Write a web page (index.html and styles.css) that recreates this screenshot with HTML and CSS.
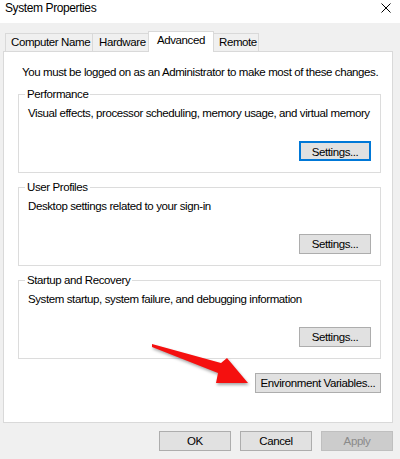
FILE: index.html
```html
<!DOCTYPE html>
<html lang="en">
<head>
<meta charset="utf-8">
<title>System Properties</title>
<link rel="stylesheet" href="styles.css">
</head>
<body>
<div class="window">
  <header class="titlebar">
    <span class="title">System Properties</span>
    <svg class="close" width="10" height="10" viewBox="0 0 10 10" aria-label="Close">
      <path d="M0.5 0.5 L9.5 9.5 M9.5 0.5 L0.5 9.5" stroke="#000" stroke-width="1" fill="none"/>
    </svg>
  </header>

  <nav class="tabs">
    <div class="tab tab-name">Computer Name</div>
    <div class="tab tab-hw">Hardware</div>
    <div class="tab tab-adv active">Advanced</div>
    <div class="tab tab-remote">Remote</div>
  </nav>

  <section class="panel">
    <p class="intro">You must be logged on as an Administrator to make most of these changes.</p>

    <fieldset class="group">
      <legend>Performance</legend>
      <p class="desc">Visual effects, processor scheduling, memory usage, and virtual memory</p>
      <div class="actions"><button class="btn focused">Settings...</button></div>
    </fieldset>

    <fieldset class="group">
      <legend>User Profiles</legend>
      <p class="desc">Desktop settings related to your sign-in</p>
      <div class="actions"><button class="btn">Settings...</button></div>
    </fieldset>

    <fieldset class="group">
      <legend>Startup and Recovery</legend>
      <p class="desc">System startup, system failure, and debugging information</p>
      <div class="actions"><button class="btn">Settings...</button></div>
    </fieldset>

    <div class="actions env"><button class="btn wide">Environment Variables...</button></div>
  </section>

  <footer class="footer">
    <button class="btn">OK</button>
    <button class="btn">Cancel</button>
    <button class="btn" disabled>Apply</button>
  </footer>

  <!-- annotation arrow pointing at the Environment Variables button -->
  <svg class="pointer" width="400" height="459" viewBox="0 0 400 459">
    <polygon points="152,344 221,363 227,358 248,383 216,383 218,373 152,347" fill="#f5100f"/>
  </svg>
</div>
</body>
</html>
```

FILE: styles.css
```css
html, body {
  margin: 0;
  padding: 0;
}

body {
  background: #f0f0f0;
  font-family: "Liberation Sans", Arial, sans-serif;
  font-size: 11.5px;
  letter-spacing: -0.4px;
  color: #000;
}

.window {
  position: relative;
  width: 400px;
  height: 459px;
  overflow: hidden;
}

/* title bar */
.titlebar {
  height: 23px;
  background: #fff;
  display: flex;
  justify-content: space-between;
  align-items: flex-start;
  padding: 0 9px 0 5px;
  box-sizing: border-box;
}

.title {
  margin-top: 1px;
  line-height: 14px;
  font-size: 12px;
}

.close {
  margin-top: 3px;
}

/* tab strip */
.tabs {
  display: flex;
  align-items: flex-end;
  height: 20px;
  margin-top: 8px;
  padding-left: 5px;
  position: relative;
  z-index: 1;
}

.tab {
  height: 18px;
  box-sizing: border-box;
  border: 1px solid #d9d9d9;
  border-bottom: none;
  padding: 0 0 0 5px;
  line-height: 17px;
  background: #f0f0f0;
  white-space: nowrap;
}

.tab + .tab {
  margin-left: -1px;
}

.tab-name { width: 88px; }
.tab-hw { width: 57px; padding-left: 6px; }
.tab-adv { width: 66px; }
.tab-remote { width: 46px; }

.tab.active {
  height: 21px;
  margin-bottom: -1px;
  background: #fff;
  padding-left: 8px;
  position: relative;
}

/* tab page */
.panel {
  margin: 0 7px 0 3px;
  background: #fff;
  border: 1px solid #d9d9d9;
  padding: 13px 11px 29px 14px;
}

.intro {
  margin: 0;
  padding-left: 4px;
  line-height: 15px;
}

.group {
  margin: 7px 0 0;
  min-width: 0;
  border: 1px solid #dcdcdc;
  padding: 5px 9px 11px;
}

.group legend {
  padding: 0 2px;
  margin-left: -3px;
  line-height: 14px;
}

.desc {
  margin: 0;
  line-height: 15px;
}

.actions {
  display: flex;
  justify-content: flex-end;
  margin-top: 20px;
}

.actions.env {
  margin-top: 14px;
}

/* push buttons */
.btn {
  width: 72px;
  height: 20px;
  box-sizing: border-box;
  padding: 0;
  margin: 0;
  font: inherit;
  letter-spacing: inherit;
  color: #000;
  background: #e1e1e1;
  border: 1px solid #adadad;
  line-height: 18px;
}

.btn.focused {
  border: 2px solid #0078d7;
}

.btn.wide {
  width: 126px;
}

.btn:disabled {
  background: #cccccc;
  border-color: #bfbfbf;
  color: #8a8a8a;
}

/* dialog buttons */
.footer {
  display: flex;
  justify-content: flex-end;
  gap: 9px;
  margin-top: 8px;
  padding-right: 7px;
}

.pointer {
  position: absolute;
  left: 0;
  top: 0;
  pointer-events: none;
  filter: drop-shadow(1px 2px 1.5px rgba(0, 0, 0, 0.35));
}
```
